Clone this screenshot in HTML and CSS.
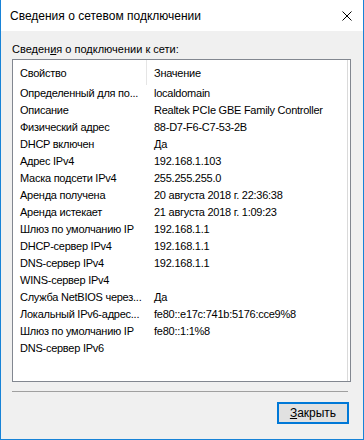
FILE: index.html
```html
<!doctype html>
<html lang="ru">
<head>
	<meta charset="UTF-8">
	<title>Сведения о сетевом подключении</title>
	<link rel="stylesheet" href="styles.css">
</head>
<body>
	<div class="window">
		<div class="titlebar">
			<span class="title">Сведения о сетевом подключении</span>
			<span class="close">
				<svg width="10" height="10" viewBox="0 0 10 10"><path d="M0.5 0.5L9.5 9.5M9.5 0.5L0.5 9.5" stroke="#000" stroke-width="1" fill="none"/></svg>
			</span>
		</div>
		<div class="content">
			<div class="label">Сведен<u>и</u>я о подключении к сети:</div>
			<div class="list">
				<div class="head">
					<div class="hcell first">Свойство</div>
					<div class="hcell">Значение</div>
				</div>
				<div class="row"><span>Определенный для по...</span><span>localdomain</span></div>
				<div class="row"><span>Описание</span><span>Realtek PCIe GBE Family Controller</span></div>
				<div class="row"><span>Физический адрес</span><span>88-D7-F6-C7-53-2B</span></div>
				<div class="row"><span>DHCP включен</span><span>Да</span></div>
				<div class="row"><span>Адрес IPv4</span><span>192.168.1.103</span></div>
				<div class="row"><span>Маска подсети IPv4</span><span>255.255.255.0</span></div>
				<div class="row"><span>Аренда получена</span><span>20 августа 2018 г. 22:36:38</span></div>
				<div class="row"><span>Аренда истекает</span><span>21 августа 2018 г. 1:09:23</span></div>
				<div class="row"><span>Шлюз по умолчанию IP</span><span>192.168.1.1</span></div>
				<div class="row"><span>DHCP-сервер IPv4</span><span>192.168.1.1</span></div>
				<div class="row"><span>DNS-сервер IPv4</span><span>192.168.1.1</span></div>
				<div class="row"><span>WINS-сервер IPv4</span><span></span></div>
				<div class="row"><span>Служба NetBIOS через...</span><span>Да</span></div>
				<div class="row"><span>Локальный IPv6-адрес...</span><span>fe80::e17c:741b:5176:cce9%8</span></div>
				<div class="row"><span>Шлюз по умолчанию IP</span><span>fe80::1:1%8</span></div>
				<div class="row"><span>DNS-сервер IPv6</span><span></span></div>
			</div>
			<div class="sep"></div>
			<div class="buttons">
				<button class="btn"><u>З</u>акрыть</button>
			</div>
		</div>
	</div>
</body>
</html>
```
FILE: styles.css
```css
*{margin:0;padding:0;box-sizing:border-box;}
body{background:#fff;font-family:"Liberation Sans",Arial,sans-serif;color:#000;}
.window{
	width:364px;
	height:440px;
	border:1px solid #1883d7;
	border-top:none;
	background:#f0f0f0;
	display:flex;
	flex-direction:column;
}
.titlebar{
	height:31px;
	background:#fff;
	display:flex;
	align-items:center;
	justify-content:space-between;
	padding:0 11px 0 9px;
}
.title{font-size:12px;}
.close{width:10px;height:10px;display:flex;}
.content{padding:11px 13px 0 11px;}
.label{font-size:11px;line-height:15px;height:15px;}
.list{
	margin-top:2px;
	width:339px;
	height:323px;
	background:#fff;
	border:1px solid #828790;
	box-shadow:inset -2px 0 0 #fff,inset -3px 0 0 #dadada;
	font-size:11px;
	letter-spacing:-0.25px;
}
.head{
	display:grid;
	grid-template-columns:134px 1fr;
	height:25px;
}
.hcell{
	display:flex;
	align-items:center;
	padding-left:7px;
}
.hcell.first{border-right:1px solid #e5e5e5;}
.row{
	display:grid;
	grid-template-columns:134px 1fr;
	height:17px;
	line-height:17px;
}
.row span{padding-left:7px;white-space:nowrap;}
.sep{
	margin-top:9px;
	width:336px;
	height:1px;
	background:#a0a0a0;
}
.buttons{
	display:flex;
	justify-content:flex-end;
	padding-right:1px;
	margin-top:10px;
}
.btn{
	width:72px;
	height:22px;
	border:2px solid #0078d7;
	background:#e1e1e1;
	font-family:"Liberation Sans",Arial,sans-serif;
	font-size:12px;
	color:#000;
}
```
